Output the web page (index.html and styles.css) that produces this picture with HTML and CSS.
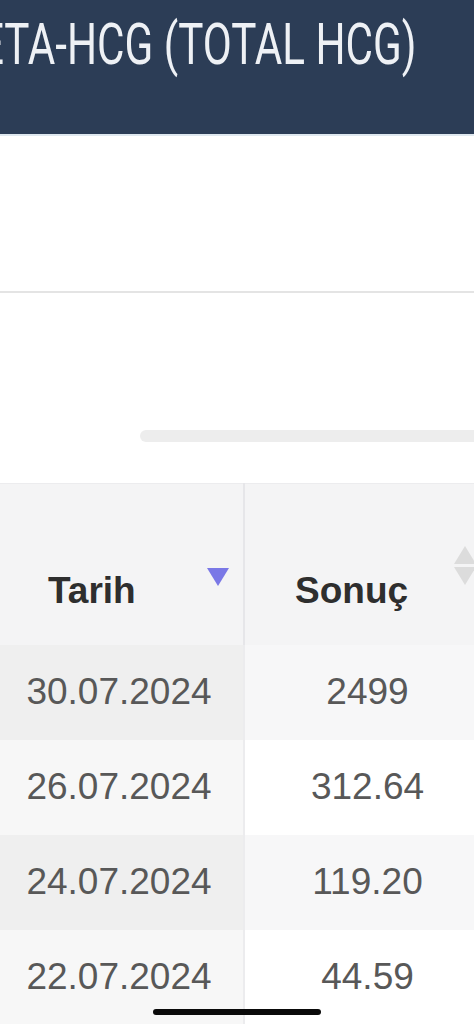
FILE: index.html
```html
<!DOCTYPE html>
<html lang="tr">

<head>
    <meta charset="UTF-8">
    <meta name="viewport" content="width=device-width, initial-scale=1.0">
    <title>Beta-HCG Sonuçları</title>
    <link rel="stylesheet" href="styles.css">
</head>

<body>
    <div class="page">
        <div class="header">
            <h1 class="title">BETA-HCG (TOTAL HCG)</h1>
        </div>

        <div class="chart-area"></div>

        <div class="scroll-area">
            <div class="scrollbar"></div>
        </div>

        <div class="table-wrap">
            <table class="results">
                <thead>
                    <tr>
                        <th class="col-date">
                            Tarih
                            <span class="sort-down"></span>
                        </th>
                        <th class="col-value">
                            Sonuç
                            <span class="sort-both">
                                <span class="arrow-up"></span>
                                <span class="arrow-down"></span>
                            </span>
                        </th>
                    </tr>
                </thead>
                <tbody>
                    <tr>
                        <td class="col-date">30.07.2024</td>
                        <td class="col-value">2499</td>
                    </tr>
                    <tr>
                        <td class="col-date">26.07.2024</td>
                        <td class="col-value">312.64</td>
                    </tr>
                    <tr>
                        <td class="col-date">24.07.2024</td>
                        <td class="col-value">119.20</td>
                    </tr>
                    <tr>
                        <td class="col-date">22.07.2024</td>
                        <td class="col-value">44.59</td>
                    </tr>
                </tbody>
            </table>
        </div>
    </div>

    <div class="home-indicator"></div>
</body>

</html>
```

FILE: styles.css
```css
body {
    margin: 0;
    background-color: #ffffff;
    font-family: "Liberation Sans", Arial, sans-serif;
    overflow: hidden;
}

.page {
    width: 474px;
    overflow: hidden;
}

.header {
    height: 134px;
    background-color: #2c3d56;
    display: flex;
    justify-content: flex-end;
    padding-right: 58px;
    border-bottom: 2px solid #dfe8ef;
    overflow: hidden;
}

.title {
    margin: 0;
    padding-top: 12px;
    font-family: Roboto, "Noto Sans", sans-serif;
    font-weight: 400;
    font-size: 57px;
    line-height: 66px;
    color: #eef1f5;
    white-space: nowrap;
    transform: scaleX(0.74);
    transform-origin: right center;
}

.chart-area {
    height: 155px;
    border-bottom: 2px solid #e4e4e4;
}

.scroll-area {
    height: 190px;
    display: flex;
    justify-content: flex-end;
    align-items: flex-start;
}

.scrollbar {
    margin-top: 137px;
    width: 334px;
    height: 12px;
    background-color: #ededed;
    border-radius: 6px 0 0 6px;
}

.table-wrap {
    width: 474px;
    overflow: hidden;
}

.results {
    width: 490px;
    border-collapse: collapse;
    table-layout: fixed;
}

.results th {
    position: relative;
    height: 161px;
    padding: 0 0 33px 0;
    box-sizing: border-box;
    background-color: #f4f4f5;
    border-top: 1px solid #ececee;
    vertical-align: bottom;
    text-align: left;
    font-size: 37px;
    line-height: 42px;
    font-weight: 700;
    color: #2e2e2e;
}

.results th.col-date {
    width: 244px;
    padding-left: 48px;
    border-right: 2px solid #e6e6e9;
}

.results th.col-value {
    padding-left: 50px;
}

.sort-down {
    position: absolute;
    left: 207px;
    top: 84px;
    width: 0;
    height: 0;
    border-left: 11px solid transparent;
    border-right: 11px solid transparent;
    border-top: 18px solid #7a78e6;
}

.sort-both {
    position: absolute;
    left: 209px;
    top: 62px;
    display: flex;
    flex-direction: column;
    gap: 3px;
}

.arrow-up {
    width: 0;
    height: 0;
    border-left: 11px solid transparent;
    border-right: 11px solid transparent;
    border-bottom: 18px solid #dcdcdc;
}

.arrow-down {
    width: 0;
    height: 0;
    border-left: 11px solid transparent;
    border-right: 11px solid transparent;
    border-top: 18px solid #dcdcdc;
}

.results td {
    height: 95px;
    padding: 0;
    text-align: center;
    vertical-align: middle;
    font-size: 37px;
    color: #585858;
}

.results td.col-date {
    padding-right: 5px;
    border-right: 2px solid #ececee;
}

.results tbody tr:nth-child(odd) td.col-date {
    background-color: #efefef;
}

.results tbody tr:nth-child(odd) td.col-value {
    background-color: #f7f7f8;
}

.results tbody tr:nth-child(even) td.col-date {
    background-color: #f7f7f7;
}

.results tbody tr:nth-child(even) td.col-value {
    background-color: #ffffff;
}

.home-indicator {
    position: fixed;
    left: 153px;
    bottom: 9px;
    width: 168px;
    height: 6px;
    border-radius: 3px;
    background-color: #0a0a0a;
}
```
